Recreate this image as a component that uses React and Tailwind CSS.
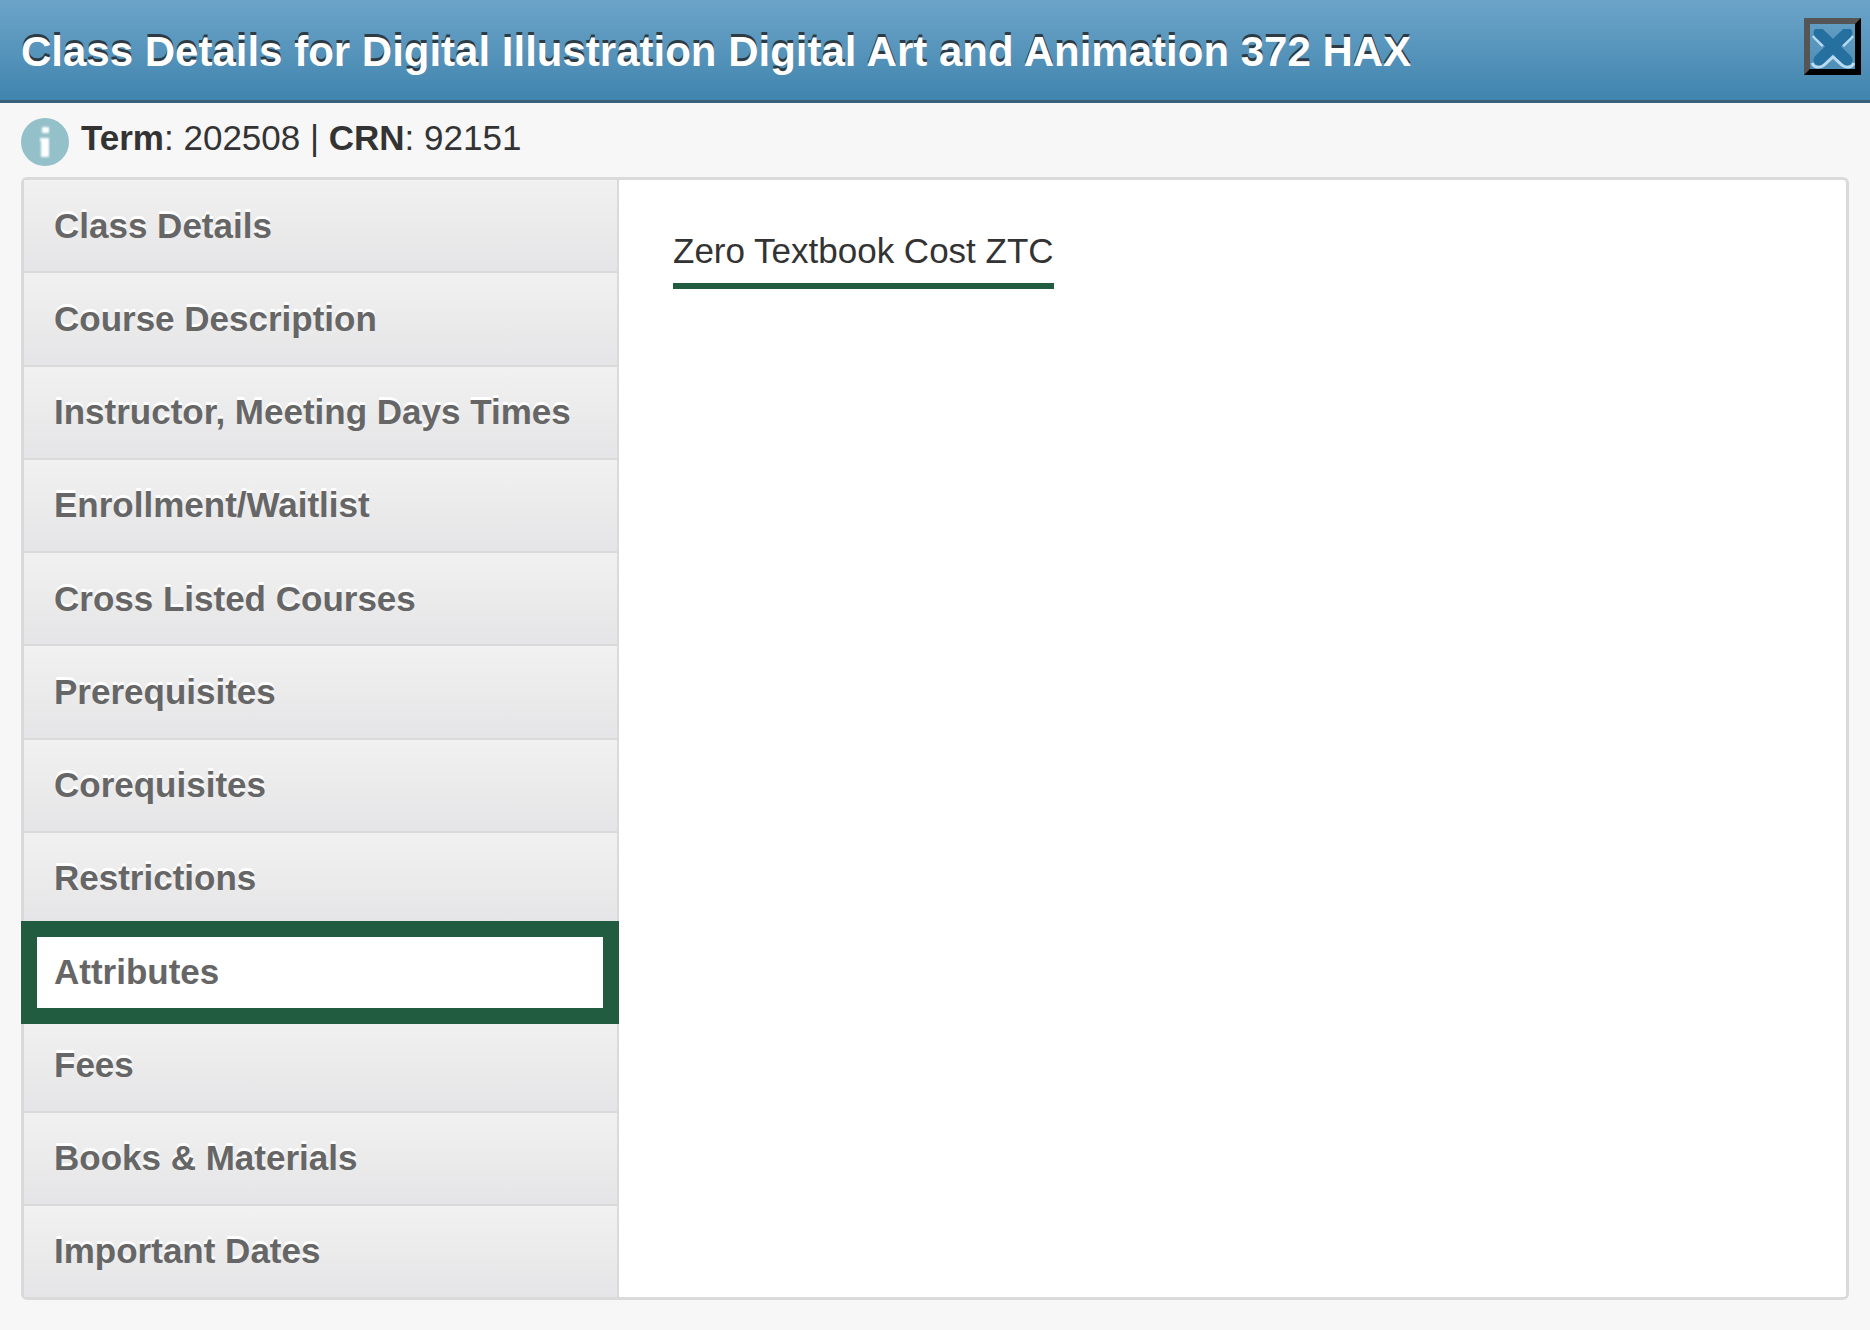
import { useState } from "react";

const sections = [
  "Class Details",
  "Course Description",
  "Instructor, Meeting Days Times",
  "Enrollment/Waitlist",
  "Cross Listed Courses",
  "Prerequisites",
  "Corequisites",
  "Restrictions",
  "Attributes",
  "Fees",
  "Books & Materials",
  "Important Dates",
];

const CloseIcon = () => (
  <svg viewBox="0 0 45 45" className="size-[45px]" aria-hidden="true">
    <defs>
      <filter id="soften">
        <feGaussianBlur stdDeviation="0.7" />
      </filter>
    </defs>
    <g fill="none" filter="url(#soften)">
      <path d="M3 12 13 22M43 12 33 22M2 39c2 5 8 5 12 2l9-8 9 8c4 3 10 3 12-2" stroke="#b9dbf4" strokeWidth="3" />
      <path d="M9 9 37 36M37 9 9 36" stroke="#256f9f" strokeWidth="11" strokeLinecap="round" />
    </g>
  </svg>
);

const InfoIcon = () => (
  <svg viewBox="0 0 48 48" className="size-12 shrink-0" aria-hidden="true">
    <defs>
      <filter id="soften-info">
        <feGaussianBlur stdDeviation="0.8" />
      </filter>
    </defs>
    <circle cx="24" cy="24" r="24" fill="#93c0c9" />
    <path d="M21 9h7v6h-7zM19 20h9v19h-8V23h-1z" fill="#fff" filter="url(#soften-info)" />
  </svg>
);

const Header = ({ title }) => (
  <header className="flex items-start justify-between border-b-[3px] border-[#3a617c] bg-linear-to-b from-[#6ca4c9] to-[#4085ae] pl-[21px] pr-[9px]">
    <h1 className="pt-7 pb-6 text-[42px] leading-[48px] font-bold text-white [text-shadow:0_-3px_0_#2d3b45]">{title}</h1>
    <button
      type="button"
      aria-label="Close"
      className="mt-[18px] size-[57px] shrink-0 overflow-hidden border-6 border-t-[#555] border-l-[#555] border-r-black border-b-black"
    >
      <CloseIcon />
    </button>
  </header>
);

const SectionList = ({ active, onSelect }) => (
  <ul className="flex w-[595px] shrink-0 flex-col border-r-2 border-[#dadada]">
    {sections.map((name) => (
      <li key={name} className="relative flex grow border-b-2 border-[#dadada] last:border-b-0">
        <button
          type="button"
          onClick={() => onSelect(name)}
          className="w-full bg-linear-to-b from-[#f1f1f1] to-[#e5e5e7] px-[30px] py-[25px] text-left text-[35px] leading-10 font-bold text-[#666] [text-shadow:0_-3px_0_#fff]"
        >
          {name}
        </button>
        {name === active && (
          <span className="pointer-events-none absolute -top-[5px] -right-[2px] -bottom-[7px] -left-[3px] z-10 flex items-start border-16 border-[#215c41] bg-white pt-[15px] pl-[17px] text-[35px] leading-10 font-bold text-[#666]">
            {name}
          </span>
        )}
      </li>
    ))}
  </ul>
);

const App = () => {
  const [active, setActive] = useState("Attributes");

  return (
    <div className="flex min-h-screen flex-col bg-[#f7f7f7] font-['Liberation_Sans',Arial,sans-serif] text-[#333]">
      <Header title="Class Details for Digital Illustration Digital Art and Animation 372 HAX" />
      <main className="flex grow flex-col px-[21px] pt-[15px] pb-[30px]">
        <div className="mb-[11px] flex gap-3">
          <InfoIcon />
          <p className="text-[35px] leading-10">
            <strong>Term</strong>: 202508 | <strong>CRN</strong>: 92151
          </p>
        </div>
        <div className="flex grow rounded-md border-3 border-[#dadada] bg-white">
          <SectionList active={active} onSelect={setActive} />
          <section className="grow px-[54px] pt-[51px]">
            {active === "Attributes" && (
              <span className="inline-block border-b-6 border-[#215c41] pb-3 text-[35px] leading-10">Zero Textbook Cost ZTC</span>
            )}
          </section>
        </div>
      </main>
    </div>
  );
};

export default App;
